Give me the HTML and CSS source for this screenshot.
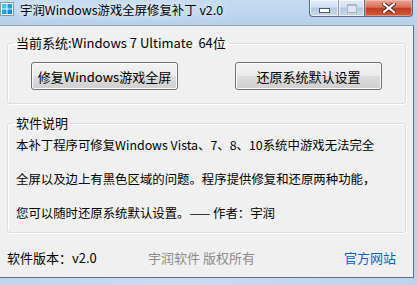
FILE: index.html
```html
<!DOCTYPE html>
<html>
<head>
    <title>宇润Windows游戏全屏修复补丁 v2.0</title>
    <link rel="stylesheet" href="styles.css">
</head>
<body>
    <div class="window">
        <div class="titlebar">
            <svg class="app-icon" width="14" height="14" viewBox="0 0 14 14">
                <rect x="0.5" y="0.5" width="13" height="13" fill="#eef3f8" stroke="#8d9cad"/>
                <rect x="2" y="2" width="4.5" height="4.5" fill="#3cc6f2"/>
                <rect x="7.5" y="2" width="4.5" height="4.5" fill="#1aa6e4"/>
                <rect x="2" y="7.5" width="4.5" height="4.5" fill="#1aa6e4"/>
                <rect x="7.5" y="7.5" width="4.5" height="4.5" fill="#0d8fd6"/>
            </svg>
            <span class="title">宇润Windows游戏全屏修复补丁 v2.0</span>
            <div class="caption">
                <span class="cap cap-min"><i></i></span>
                <span class="cap cap-max"><i></i></span>
                <span class="cap cap-close">
                    <svg width="14" height="10" viewBox="0 0 14 10">
                        <path d="M2 1 L12 9 M12 1 L2 9" stroke="#4a2420" stroke-width="4" stroke-linecap="square"/>
                        <path d="M2 1 L12 9 M12 1 L2 9" stroke="#fff" stroke-width="2.2" stroke-linecap="square"/>
                    </svg>
                </span>
            </div>
        </div>
        <div class="client">
            <fieldset class="group">
                <legend>当前系统:Windows 7 Ultimate&nbsp; 64位</legend>
                <div class="btn-row">
                    <button class="btn">修复Windows游戏全屏</button>
                    <button class="btn">还原系统默认设置</button>
                </div>
            </fieldset>
            <fieldset class="group group-info">
                <legend>软件说明</legend>
                <div class="info">
                    <p>本补丁程序可修复Windows Vista、7、8、10系统中游戏无法完全</p>
                    <p>全屏以及边上有黑色区域的问题。程序提供修复和还原两种功能，</p>
                    <p>您可以随时还原系统默认设置。—— 作者：宇润</p>
                </div>
            </fieldset>
            <div class="footer">
                <span>软件版本：v2.0</span>
                <span class="copyright">宇润软件 版权所有</span>
                <a class="site" href="#">官方网站</a>
            </div>
        </div>
    </div>
</body>
</html>
```

FILE: styles.css
```css
body {
    margin: 0;
    font-family: "Noto Sans CJK SC", "Liberation Sans", sans-serif;
    color: #000;
}
.window {
    width: 417px;
    height: 285px;
    overflow: hidden;
    background: linear-gradient(90deg, #bdd5ee 0%, #c9ddf2 40%, #bcd3ec 100%);
}
.titlebar {
    height: 25px;
    display: flex;
    align-items: flex-start;
    background: linear-gradient(180deg, #c6dbf1 0%, #bcd4ee 60%, #b7d0ea 100%);
}
.app-icon {
    margin: 2px 0 0 0;
    flex: none;
}
.title {
    margin: 2px 0 0 6px;
    font-size: 12.4px;
    line-height: 17px;
    color: #000;
    text-shadow: 0 0 6px #eef5fc, 0 0 10px #eef5fc;
}
.caption {
    margin-left: auto;
    margin-right: 4px;
    display: flex;
    height: 17px;
}
.cap {
    height: 16px;
    border: 1px solid #5b6a7c;
    border-top: none;
    display: flex;
    align-items: center;
    justify-content: center;
}
.cap-min {
    width: 28px;
    border-radius: 0 0 0 4px;
    border-right: none;
    background: linear-gradient(180deg, #e3edf8 0%, #d0dff0 45%, #b5c9e0 50%, #c6d8ec 100%);
    box-shadow: inset 0 0 0 1px rgba(255, 255, 255, 0.6);
}
.cap-min i {
    width: 9px;
    height: 3px;
    margin-top: 5px;
    background: #fff;
    border: 1px solid #4c5a6a;
}
.cap-max {
    width: 25px;
    border-right: none;
    border-left: 1px solid #8d9db0;
    background: linear-gradient(180deg, #e3edf8 0%, #d0dff0 45%, #b5c9e0 50%, #c6d8ec 100%);
    box-shadow: inset 0 0 0 1px rgba(255, 255, 255, 0.6);
}
.cap-max i {
    width: 8px;
    height: 6px;
    border: 1px solid #a9b6c4;
    border-top-width: 2px;
    background: #dfe8f2;
}
.cap-close {
    width: 47px;
    border-radius: 0 0 4px 0;
    background: linear-gradient(180deg, #e9a595 0%, #d7715c 45%, #c23c22 52%, #cf5a3c 100%);
    box-shadow: inset 0 0 0 1px rgba(255, 220, 210, 0.45);
}
.client {
    width: 413px;
    height: 251px;
    background: #f0f0f0;
    border-top: 1px solid #96a6b8;
    border-right: 1px solid #5f6f80;
    border-bottom: 1px solid #5f6f80;
    display: flex;
    flex-direction: column;
}
.group {
    margin: 9px 7px 0 7px;
    padding: 0;
    border: 1px solid #d5dfe5;
    border-radius: 3px;
    box-shadow: inset 1px 1px 0 #fff, 1px 1px 0 #fff;
    min-width: 0;
}
.group legend {
    margin-left: 5px;
    padding: 0 3px;
    font-size: 13px;
    line-height: 16px;
}
.btn-row {
    display: flex;
    justify-content: space-between;
    padding: 11px 23px 13px 23px;
}
.btn {
    width: 147px;
    height: 28px;
    padding: 0;
    font-family: inherit;
    font-size: 13px;
    color: #000;
    border: 1px solid #707070;
    border-radius: 3px;
    background: linear-gradient(180deg, #f2f2f2 0%, #ebebeb 48%, #dddddd 52%, #cfcfcf 100%);
    box-shadow: inset 0 0 0 1px #fbfbfb;
}
.group-info {
    margin-top: 11px;
}
.info {
    padding: 6px 8px 10px 8px;
    font-size: 12.4px;
    line-height: 17px;
}
.info p {
    margin: 0 0 17px 0;
    white-space: nowrap;
}
.info p:last-child {
    margin-bottom: 0;
}
.footer {
    display: grid;
    grid-template-columns: 141px 1fr auto;
    margin-top: 16px;
    padding: 0 17px 0 7px;
    font-size: 13px;
    line-height: 17px;
}
.copyright {
    color: #8c8c8c;
}
.site {
    color: #0a64c8;
    text-decoration: none;
}
```
